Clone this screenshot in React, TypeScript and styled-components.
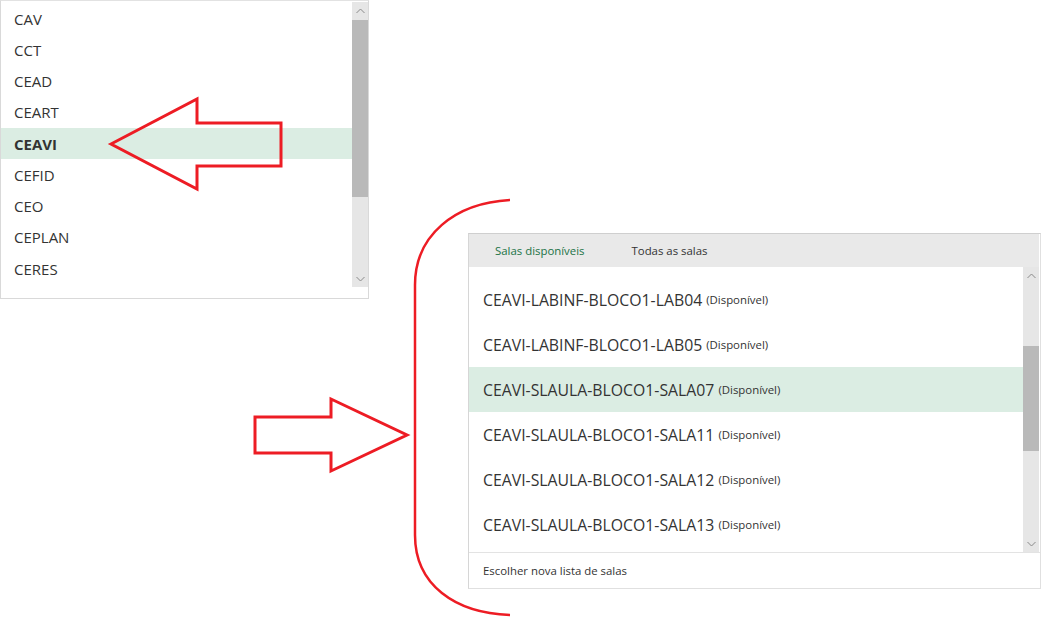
import { createGlobalStyle } from 'styled-components';
import styled from 'styled-components';

const GlobalStyle = createGlobalStyle`
  body {
    margin: 0;
    background: #ffffff;
    font-family: 'Open Sans', 'Noto Sans', Arial, sans-serif;
    color: #333333;
    overflow: hidden;
  }
`;

const Page = styled.div`
  position: relative;
  width: 1061px;
  height: 622px;
  display: flex;
  align-items: flex-start;
`;

/* ---------- scrollbar ---------- */

const Track = styled.div<{ $height: number }>`
  width: 16px;
  height: ${(p) => p.$height}px;
  background: #e6e6e6;
  display: flex;
  flex-direction: column;
  align-items: center;
  flex-shrink: 0;
`;

const ArrowSlot = styled.div`
  height: 17px;
  width: 16px;
  display: flex;
  align-items: center;
  justify-content: center;
  flex-shrink: 0;
`;

const Thumb = styled.div<{ $top: number; $height: number }>`
  width: 16px;
  margin-top: ${(p) => p.$top}px;
  height: ${(p) => p.$height}px;
  background: #b9b9b9;
  flex-shrink: 0;
`;

const Spacer = styled.div`
  flex: 1;
`;

function Chevron({ up }: { up?: boolean }) {
  return (
    <svg width="9" height="6" viewBox="0 0 9 6">
      <path
        d={up ? 'M0.5 5 L4.5 1 L8.5 5' : 'M0.5 1 L4.5 5 L8.5 1'}
        fill="none"
        stroke="#8a8a8a"
        strokeWidth="1"
      />
    </svg>
  );
}

function Scrollbar({
  height,
  thumbTop,
  thumbHeight,
}: {
  height: number;
  thumbTop: number;
  thumbHeight: number;
}) {
  return (
    <Track $height={height}>
      <ArrowSlot>
        <Chevron up />
      </ArrowSlot>
      <Thumb $top={thumbTop} $height={thumbHeight} />
      <Spacer />
      <ArrowSlot>
        <Chevron />
      </ArrowSlot>
    </Track>
  );
}

/* ---------- left dropdown ---------- */

const CenterBox = styled.div`
  width: 369px;
  height: 299px;
  box-sizing: border-box;
  border: 1px solid #d9d9d9;
  border-top-color: #e2e2e2;
  background: #fff;
  display: flex;
  align-items: flex-start;
  flex-shrink: 0;
`;

const CenterList = styled.div`
  flex: 1;
  padding-top: 2px;
  display: flex;
  flex-direction: column;
`;

const CenterRow = styled.div<{ $selected?: boolean }>`
  height: 31.25px;
  display: flex;
  align-items: center;
  padding-left: 13px;
  font-size: 15px;
  color: #333;
  background: ${(p) => (p.$selected ? '#dbede3' : 'transparent')};
  font-weight: ${(p) => (p.$selected ? 700 : 400)};
`;

const CenterScroll = styled.div`
  margin-top: 1px;
`;

/* ---------- right panel ---------- */

const RoomWrap = styled.div`
  margin-left: 99px;
  margin-top: 233px;
`;

const RoomPanel = styled.div`
  width: 573px;
  box-sizing: border-box;
  border: 1px solid #e0e0e0;
  border-top-color: #cfcfcf;
  border-left-color: #d6d6d6;
  background: #fff;
`;

const TabBar = styled.div`
  height: 33px;
  background: #e9e9e9;
  display: flex;
  align-items: center;
  padding-left: 26px;
  gap: 47px;
  margin-right: 1px;
`;

const Tab = styled.span<{ $active?: boolean }>`
  font-size: 11.4px;
  color: ${(p) => (p.$active ? '#217346' : '#333')};
`;

const RoomBody = styled.div`
  display: flex;
  align-items: flex-start;
  height: 285px;
  margin-right: 1px;
`;

const RoomList = styled.div`
  flex: 1;
  height: 285px;
  overflow: hidden;
  padding-top: 10px;
  box-sizing: border-box;
`;

const RoomRow = styled.div<{ $selected?: boolean }>`
  height: 45px;
  display: flex;
  align-items: center;
  padding-left: 14px;
  background: ${(p) => (p.$selected ? '#dbede3' : 'transparent')};
  white-space: nowrap;
`;

const RoomName = styled.span`
  font-size: 15.8px;
  color: #333;
`;

const RoomStatus = styled.span`
  font-size: 11.4px;
  color: #333;
  margin-left: 4px;
`;

const Footer = styled.div`
  height: 35px;
  border-top: 1px solid #e3e3e3;
  display: flex;
  align-items: center;
  padding-left: 14px;
  font-size: 11.4px;
  color: #333;
`;

/* ---------- annotations ---------- */

const Overlay = styled.svg`
  position: absolute;
  left: 0;
  top: 0;
  pointer-events: none;
`;

const centers = ['CAV', 'CCT', 'CEAD', 'CEART', 'CEAVI', 'CEFID', 'CEO', 'CEPLAN', 'CERES'];

const rooms = [
  'CEAVI-LABINF-BLOCO1-LAB04',
  'CEAVI-LABINF-BLOCO1-LAB05',
  'CEAVI-SLAULA-BLOCO1-SALA07',
  'CEAVI-SLAULA-BLOCO1-SALA11',
  'CEAVI-SLAULA-BLOCO1-SALA12',
  'CEAVI-SLAULA-BLOCO1-SALA13',
];

export default function App() {
  const selectedCenter = 'CEAVI';
  const selectedRoom = 'CEAVI-SLAULA-BLOCO1-SALA07';

  return (
    <>
      <GlobalStyle />
      <Page>
        <CenterBox>
          <CenterList>
            {centers.map((c) => (
              <CenterRow key={c} $selected={c === selectedCenter}>
                {c}
              </CenterRow>
            ))}
          </CenterList>
          <CenterScroll>
            <Scrollbar height={285} thumbTop={1} thumbHeight={177} />
          </CenterScroll>
        </CenterBox>

        <RoomWrap>
          <RoomPanel>
            <TabBar>
              <Tab $active>Salas disponíveis</Tab>
              <Tab>Todas as salas</Tab>
            </TabBar>
            <RoomBody>
              <RoomList>
                {rooms.map((r) => (
                  <RoomRow key={r} $selected={r === selectedRoom}>
                    <RoomName>{r}</RoomName>
                    <RoomStatus>(Disponível)</RoomStatus>
                  </RoomRow>
                ))}
              </RoomList>
              <Scrollbar height={285} thumbTop={62} thumbHeight={105} />
            </RoomBody>
            <Footer>Escolher nova lista de salas</Footer>
          </RoomPanel>
        </RoomWrap>

        <Overlay width="1061" height="622" viewBox="0 0 1061 622">
          <g fill="none" stroke="#ed1c24" strokeWidth="3" strokeLinejoin="miter">
            <polygon points="111,144 197,99 197,123 281,123 281,166 197,166 197,189" />
            <polygon points="255,417 331,417 331,399 407,435 331,471 331,453 255,453" />
          </g>
          <path
            d="M510 200 C 455 203, 415 235, 415 285 L 415 535 C 415 585, 455 613, 510 615"
            fill="none"
            stroke="#ed1c24"
            strokeWidth="2.5"
          />
        </Overlay>
      </Page>
    </>
  );
}
